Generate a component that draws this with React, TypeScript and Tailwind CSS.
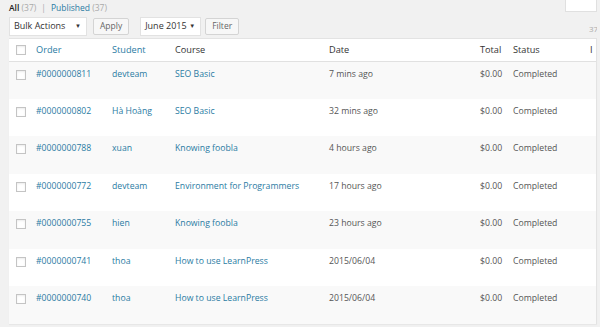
import React from 'react';

type Order = {
  id: string;
  student: string;
  course: string;
  date: string;
  total: string;
  status: string;
};

const orders: Order[] = [
  { id: '#0000000811', student: 'devteam', course: 'SEO Basic', date: '7 mins ago', total: '$0.00', status: 'Completed' },
  { id: '#0000000802', student: 'Hà Hoàng', course: 'SEO Basic', date: '32 mins ago', total: '$0.00', status: 'Completed' },
  { id: '#0000000788', student: 'xuan', course: 'Knowing foobla', date: '4 hours ago', total: '$0.00', status: 'Completed' },
  { id: '#0000000772', student: 'devteam', course: 'Environment for Programmers', date: '17 hours ago', total: '$0.00', status: 'Completed' },
  { id: '#0000000755', student: 'hien', course: 'Knowing foobla', date: '23 hours ago', total: '$0.00', status: 'Completed' },
  { id: '#0000000741', student: 'thoa', course: 'How to use LearnPress', date: '2015/06/04', total: '$0.00', status: 'Completed' },
  { id: '#0000000740', student: 'thoa', course: 'How to use LearnPress', date: '2015/06/04', total: '$0.00', status: 'Completed' },
];

function Checkbox() {
  return (
    <span className="block w-[10px] h-[10px] border border-[#c4c4c4] bg-white shadow-[inset_0_1px_2px_rgba(0,0,0,0.08)]" />
  );
}

function Select({ label, width }: { label: string; width: string }) {
  return (
    <div className={`${width} h-[19px] bg-white border border-[#e2e2e2] flex items-center justify-between pl-[4px] pr-[5px] text-[#333] text-[9px]`}>
      <span>{label}</span>
      <span className="text-[6px] leading-none">▼</span>
    </div>
  );
}

function Button({ label }: { label: string }) {
  return (
    <div className="h-[17px] px-[6px] bg-[#f7f7f7] border border-[#d4d4d4] rounded-[2px] flex items-center text-[#666] text-[8.5px]">
      {label}
    </div>
  );
}

export default function App() {
  return (
    <div
      className="w-[600px] h-[327px] overflow-hidden bg-[#f1f1f1] text-[8.7px] text-[#555]"
      style={{ fontFamily: '"Open Sans", "Noto Sans", sans-serif' }}
    >
      {/* Top bar: view filters + search box */}
      <div className="flex items-start justify-between pl-[9px] h-[14px]">
        <div className="pt-[2px] text-[8.5px] leading-[12px]">
          <span className="font-semibold text-[#222]">All</span>
          <span className="text-[#aaa]"> (37)</span>
          <span className="text-[#aaa] px-[5px]">|</span>
          <span className="text-[#2a7ba3]">Published</span>
          <span className="text-[#aaa]"> (37)</span>
        </div>
        <div className="w-[32px] h-[12px] bg-white border border-[#e0e0e0] border-t-0 mr-[3px]" />
      </div>

      {/* Bulk actions toolbar */}
      <div className="flex items-center h-[24px] pl-[9px] pr-[3px]">
        <Select label="Bulk Actions" width="w-[78px]" />
        <div className="ml-[6px]">
          <Button label="Apply" />
        </div>
        <div className="ml-[11px]">
          <Select label="June 2015" width="w-[61px]" />
        </div>
        <div className="ml-[4px]">
          <Button label="Filter" />
        </div>
        <span className="ml-auto pt-[5px] text-[#aaa] text-[8px] whitespace-nowrap w-[8px] overflow-hidden">37 items</span>
      </div>

      {/* Orders table */}
      <div className="ml-[9px] w-[588px] border-t border-r border-[#e3e3e3] bg-white shadow-[0_1px_1px_rgba(0,0,0,0.04)]">
        <table className="w-full table-fixed border-collapse">
          <colgroup>
            <col className="w-[21px]" />
            <col className="w-[76px]" />
            <col className="w-[63px]" />
            <col className="w-[154px]" />
            <col className="w-[151px]" />
            <col className="w-[33px]" />
            <col className="w-[77px]" />
            <col />
          </colgroup>
          <thead>
            <tr className="h-[22px] border-b border-[#e1e1e1] text-left text-[9.2px]">
              <th className="pl-[7px] font-normal"><Checkbox /></th>
              <th className="pl-[6px] font-normal text-[#2a7ba3]">Order</th>
              <th className="pl-[6px] font-normal text-[#2a7ba3]">Student</th>
              <th className="pl-[6px] font-normal text-[#333]">Course</th>
              <th className="pl-[6px] font-normal text-[#333]">Date</th>
              <th className="pl-[6px] font-normal text-[#333]">Total</th>
              <th className="pl-[6px] font-normal text-[#333]">Status</th>
              <th className="pl-[6px] font-normal text-[#333] overflow-hidden whitespace-nowrap">I</th>
            </tr>
          </thead>
          <tbody>
            {orders.map((o, i) => (
              <tr key={o.id} className={`h-[37.5px] align-top ${i % 2 === 0 ? 'bg-[#f9f9f9]' : 'bg-white'}`}>
                <td className="pl-[7px] pt-[8px]"><Checkbox /></td>
                <td className="pl-[6px] pt-[6px] text-[#2a7ba3] whitespace-nowrap">{o.id}</td>
                <td className="pl-[6px] pt-[6px] text-[#2a7ba3] whitespace-nowrap">{o.student}</td>
                <td className="pl-[6px] pt-[6px] text-[#2a7ba3] whitespace-nowrap">{o.course}</td>
                <td className="pl-[6px] pt-[6px] whitespace-nowrap">{o.date}</td>
                <td className="pl-[6px] pt-[6px] whitespace-nowrap">{o.total}</td>
                <td className="pl-[6px] pt-[6px] whitespace-nowrap">{o.status}</td>
                <td />
              </tr>
            ))}
          </tbody>
        </table>
      </div>
    </div>
  );
}
